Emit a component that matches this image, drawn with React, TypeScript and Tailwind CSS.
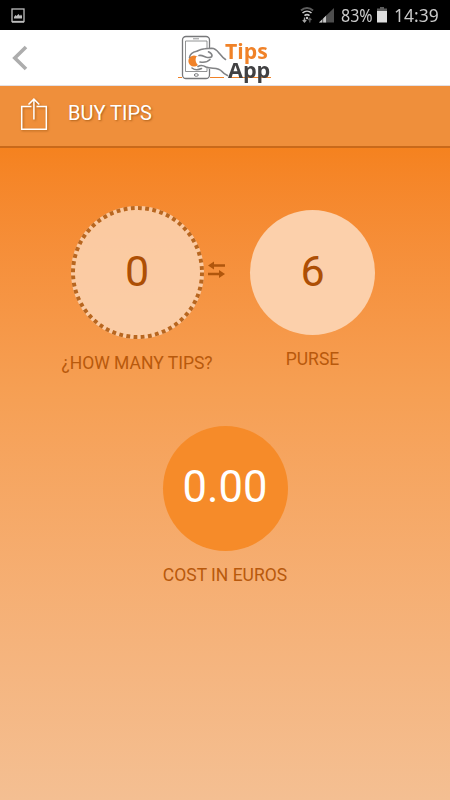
import React from "react";

function StatusBar() {
  return (
    <div className="h-[30px] bg-black flex items-center justify-between pl-[11px] pr-[11px] text-[#c9c9c9]">
      <svg width="14" height="15" viewBox="0 0 14 15" className="mt-[1px]">
        <rect x="1" y="1" width="12" height="12.500" fill="none" stroke="#bdbdbd" strokeWidth="1.300" />
        <path d="M1 14h12" stroke="#bdbdbd" strokeWidth="1.500" />
        <path d="M3 10.500V9l1.500-2 1 1 2-2 1.500 2 1-1.500L11 8v2.500z" fill="#bdbdbd" />
      </svg>

      <div className="flex items-center h-full">
        <svg width="36" height="18" viewBox="0 0 36 18" className="mr-[5px]">
          <path d="M1 4.500C4.500 1.300 9.500 1.300 13 4.500" fill="none" stroke="#5c5c5c" strokeWidth="2" />
          <path d="M2.500 7c2.600-2.400 6.400-2.400 9 0M4.500 9.700c1.500-1.300 3.500-1.300 5 0" fill="none" stroke="#c9c9c9" strokeWidth="1.600" />
          <circle cx="7" cy="12" r="1.200" fill="#c9c9c9" />
          <path d="M4.500 11.500v4M2.800 14l1.700 2 1.700-2" fill="none" stroke="#a5a5a5" strokeWidth="1.300" />
          <path d="M9.800 16.500v-4M8.200 14l1.600-1.800 1.600 1.800" fill="none" stroke="#5c5c5c" strokeWidth="1.300" />
          <path d="M19 16.500L34 2v14.500z" fill="#4d4d4d" />
          <path d="M19 16.500L27 8.800v7.700z" fill="#c9c9c9" />
          <path d="M22.700 12v5M26.500 8v9" stroke="#000" strokeWidth="0.600" />
        </svg>
        <span className="w-[32px] font-['Noto_Sans'] text-[18px] leading-none whitespace-nowrap">
          <span className="inline-block origin-left scale-x-[0.89]">83%</span>
        </span>
        <svg width="10" height="16" viewBox="0 0 10 16" className="mr-[7px] ml-[4px]">
          <path d="M3 0h4v1.500h3V4H0V1.500h3z" fill="#5c5c5c" />
          <path d="M0 4h10v11.500H0z" fill="#dedede" />
        </svg>
        <span className="w-[45px] font-['Noto_Sans'] text-[18px] leading-none whitespace-nowrap">
          <span className="inline-block origin-left scale-x-[0.97]">14:39</span>
        </span>
      </div>
    </div>
  );
}

function Logo() {
  return (
    <div className="relative w-[96px] h-[48px]">
      <svg width="96" height="48" viewBox="0 0 96 48">
        <path d="M1 43.500h4M33 43.500h14M52 43.500h42" stroke="#f08228" strokeWidth="1.200" />
        <g fill="none" stroke="#77787a" strokeLinejoin="round">
          <rect x="5.500" y="2.500" width="27" height="42" rx="3.500" strokeWidth="1.300" />
          <rect x="8.500" y="7" width="21.500" height="30.500" strokeWidth="0.800" />
          <ellipse cx="19.300" cy="41" rx="2" ry="1.300" strokeWidth="1" />
          <path d="M16 4.800h6" strokeWidth="0.800" />
        </g>
        <path d="M14 22l6-5 8-2.700 8-.3c3 .5 6 4 12 11v17l-8-5-10-3-10 1-5-3z" fill="#fff" />
        <circle cx="17" cy="27" r="5.600" fill="#f08228" />
        <path d="M19.500 22.500c2.500 0 4 1 4 3l-1.500 6c-3-1-4.500-6-2.500-9z" fill="#fff" />
        <g fill="none" stroke="#828385" strokeWidth="1.600" strokeLinecap="round" strokeLinejoin="round">
          <path d="M12.500 23.500c.5-3.500 3.700-5.500 7.200-6.200 3-1.700 5-2.500 8-2.600l7-.4c4 0 6 3 8 5.500 1.700 2.200 3.300 4.200 5.800 5.700" />
          <path d="M22 21.500c3-.6 5 1 7.500 1.700 2.800.7 5.300.3 5.500-1.400.1-1.700-1.500-3-3.500-4" />
          <path d="M23 28c4 .8 7.500 0 10-2.500" />
          <path d="M15 34c2.500 2 6.500 2 9.500.5M21 32.500c3-2 5.500-1 8 .5 5.500 2.500 12-.5 16 4.500 1.600 2 3 3 5.500 4" />
        </g>
      </svg>
      <div className="absolute left-[48px] top-[8px] flex flex-col font-['Open_Sans',sans-serif] font-bold text-[21px] leading-[19px]">
        <span className="origin-left scale-x-[1.010] text-[#f08228]">Tips</span>
        <span className="ml-[3px] origin-left scale-x-[1.030] text-[#414143]">App</span>
      </div>
    </div>
  );
}

function Header() {
  return (
    <header className="h-14 bg-white grid grid-cols-3 items-center border-b border-[#e4e0e4]">
      <svg width="16" height="26" viewBox="0 0 16 26" className="ml-3">
        <path d="M14 2L2.800 13 14 24" fill="none" stroke="#adadad" strokeWidth="3.600" />
      </svg>
      <div className="justify-self-center pt-[1px]">
        <Logo />
      </div>
    </header>
  );
}

function TitleBar() {
  return (
    <div className="h-[62px] bg-[#ef8f3b] border-b-2 border-[#c9691a] flex items-start">
      <svg width="30" height="36" viewBox="0 0 30 36" className="ml-5 mt-[9px] drop-shadow-[1px_1px_1px_rgba(120,60,0,0.5)]">
        <path d="M11.500 11.500H1.700v22.800h24.600V11.500h-9.800M13.900 24.500V4M8.500 9.500l5.400-5.400 5.400 5.400" fill="none" stroke="#fff" strokeWidth="1.500" />
      </svg>
      <h1 className="ml-[18px] mt-[15px] text-[20px] leading-6 text-white [text-shadow:1px_1px_2px_rgba(120,60,0,0.55)]">
        BUY TIPS
      </h1>
    </div>
  );
}

function SwapIcon() {
  return (
    <svg width="17" height="18" viewBox="0 0 17 18">
      <path d="M0 4.500L6 .500V3.200h11v2.600H6v2.700zM17 13L11 9v2.700H0v2.600h11V17z" fill="#b0560c" />
    </svg>
  );
}

export default function App() {
  return (
    <div className="w-[450px] h-[800px] overflow-hidden flex flex-col font-['Roboto',sans-serif]">
      <StatusBar />
      <Header />
      <TitleBar />

      <main className="flex-1 bg-linear-to-b from-[#f5821f] via-[#f69f53] via-37% to-[#f4bf92] text-[#b8590c]">
        <div className="flex items-start pt-[58px]">
          <div className="w-[152px] ml-[61px] flex flex-col items-center">
            <div className="relative w-[133px] h-[133px] rounded-full bg-[#fdd9bd]/80 flex items-center justify-center text-[43px] text-[#ad4f05]">
              <svg className="absolute inset-0" width="133" height="133" viewBox="0 0 133 133">
                <circle cx="66.500" cy="66.500" r="64.500" fill="none" stroke="#b8661f" strokeWidth="4" strokeDasharray="3.800 3.438" />
              </svg>
              <span className="-mt-[2px]">0</span>
            </div>
            <p className="mt-[12px] text-[17.500px] leading-6 whitespace-nowrap">¿HOW MANY TIPS?</p>
          </div>
          <div className="mt-[55px] -ml-[5px]">
            <SwapIcon />
          </div>
          <div className="ml-[25px] mt-1 w-[125px] flex flex-col items-center">
            <div className="w-[125px] h-[125px] rounded-full bg-[#fcd0ab] flex items-center justify-center text-[43px] text-[#ad4f05]">
              <span className="-mt-[2px]">6</span>
            </div>
            <p className="mt-[12px] text-[17.500px] leading-6">PURSE</p>
          </div>
        </div>

        <div className="mt-[51px] flex flex-col items-center">
          <div className="w-[125px] h-[125px] rounded-full bg-[#f68b29] flex items-center justify-center text-[43.500px] text-white">
            <span className="-mt-[2px]">0.00</span>
          </div>
          <p className="mt-[12px] text-[17.500px] leading-6">COST IN EUROS</p>
        </div>
      </main>
    </div>
  );
}
